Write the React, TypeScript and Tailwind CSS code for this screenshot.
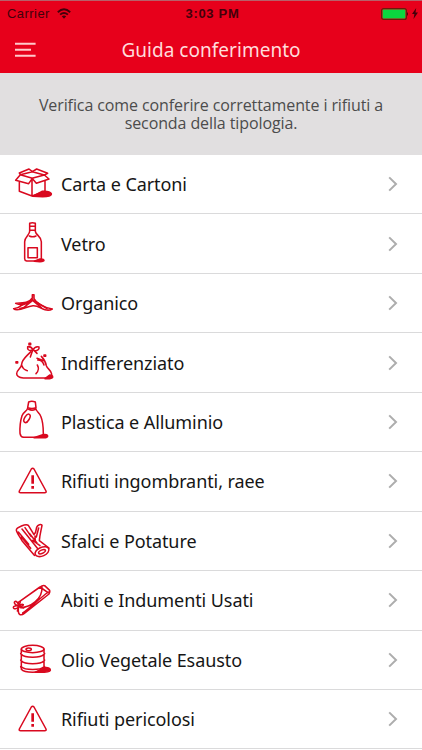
import { ReactNode } from "react";

const BoxIcon = () => (
  <>
    <path d="M58 82v27l38 14 39-14V79M96 70v53M61 59l36 11-11 16-39-10zM96 70l37-10 14 12-38 13zM61 59l-3-5 29-12 10 8 13-8 33 13-10 5M61 59l36-9 36 10" />
    <path d="M98 124l28-15c18-2 29 4 28 9-1 5-12 7-26 7z" fill="currentColor" />
  </>
);

const BottleIcon = () => (
  <>
    <path d="M89 28q8-3 17 0v24c1 11 18 15 18 31v51q0 6-7 7H80q-6-1-6-7V83c0-15 15-20 15-31zM89 37h17M89 49h17M88 66q10 5 20 0M84 101h28v30H84z" />
    <path d="M103 142l17-7q11-1 12 4 0 4-12 4z" fill="currentColor" />
  </>
);

const PeelIcon = () => (
  <>
    <path d="M97 62h5v12c5 11 27 27 55 31-7 4-15 4-22 2-14-4-20-13-36-12-20 2-29 12-48 12-4 0-8-1-10-3 12-1 20-6 27-12-8 0-16-1-21-4 23-1 41-1 50-16z" />
    <path d="M59 90c16 0 30-4 39-14M72 100l26-21 26 22M101 79l40 25M68 92l22-7M60 104l18-5" strokeWidth="5" />
  </>
);

const BagIcon = () => (
  <>
    <path d="M94 52c-9 2-12-4-11-11 8-1 14 5 16 10 3-6 10-11 18-9 2 8-6 12-13 11M98 52l-7 20M102 52l9 9M92 56c-13 15-26 22-27 38-1 13-15 15-15 28 0 8 5 11 20 13h70c12 0 15-6 15-12-1-11-13-15-16-25-2-12-8-21-15-28M111 76l20 7M113 81q14 0 19 15M112 96q8 14-4 26M66 98q3 12 16 15" />
    <path d="M135 137l14-11q9 0 9 6 0 4-9 5zM87 31h5v4h-5zM132 66h5v4h-5zM48 86h5v4h-5z" fill="currentColor" />
  </>
);

const DetergentIcon = () => (
  <>
    <path d="M86 30q9-4 20 0l2 17q-12 5-25 0zM83 48c-1 10-13 11-17 23-5 16-7 34-6 53 1 8 5 11 11 12h54c4-2 5-6 5-11 0-19-2-39-8-53-4-10-14-13-15-24M86 52q10 5 20 0" />
    <ellipse cx="81" cy="79" rx="7" ry="14" transform="rotate(30 81 79)" />
    <path d="M102 137l26-9q15-2 15 4-1 6-15 5z" fill="currentColor" />
  </>
);

const WarningIcon = () => (
  <>
    <path d="M94 51q4-5 8 0l36 66q2 5-4 5H62q-6 0-4-5z" />
    <path d="M98 70v25M98 102v8" strokeWidth="8" strokeLinecap="butt" />
  </>
);

const LogIcon = () => (
  <>
    <path d="M49 57c0-8 29-20 36-14l17 28c10-7 3-24 13-28 4-3 11-3 11 0-3 17-7 30-8 46l29 22M49 57c0 7 10 19 17 32l37 44M55 63l31 37M66 54l48 60M75 50l18 26M64 78l28 34M89 68l22 28M98 88l22 16M109 78l7-27M105 75l1 18" />
    <ellipse cx="126" cy="122" rx="22" ry="13" transform="rotate(-24 126 122)" />
    <ellipse cx="126" cy="122" rx="11" ry="5" transform="rotate(-24 126 122)" />
  </>
);

const ClothesIcon = () => (
  <>
    <path d="M55 94l65-46q8-6 14-4l15 14q2 6-2 11L73 127q-7 6-13 4-6-3-5-17zM62 110c28-1 66-24 64-62M68 126c14-8 51-44 77-63M120 48l24 17" />
    <path d="M57 104c-5-15-12-15-14-10 0 6 7 10 14 12-8-3-17-1-17 3 1 7 11 5 17-2 2-5 8-9 13-6-1 5-8 6-13 6l-5 13M57 107l14 4M57 104l4-12" />
  </>
);

const BarrelIcon = () => (
  <>
    <ellipse cx="98" cy="57" rx="34" ry="11" />
    <ellipse cx="86" cy="58" rx="8" ry="4" />
    <path d="M64 58v10q-4 2 0 5v15q-4 2 0 5v15q-4 2 0 5v5c10 12 58 12 68 0v-5q4-3 0-5V93q4-3 0-5V73q4-3 0-5V58M64 73c10 12 58 12 68 0M64 92c10 12 58 12 68 0M64 110c10 11 58 11 68 0" />
    <path d="M105 127l27-14c14-2 20 3 19 8-1 4-15 6-32 6z" fill="currentColor" />
  </>
);

const items: { label: string; icon: ReactNode }[] = [
  { label: "Carta e Cartoni", icon: <BoxIcon /> },
  { label: "Vetro", icon: <BottleIcon /> },
  { label: "Organico", icon: <PeelIcon /> },
  { label: "Indifferenziato", icon: <BagIcon /> },
  { label: "Plastica e Alluminio", icon: <DetergentIcon /> },
  { label: "Rifiuti ingombranti, raee", icon: <WarningIcon /> },
  { label: "Sfalci e Potature", icon: <LogIcon /> },
  { label: "Abiti e Indumenti Usati", icon: <ClothesIcon /> },
  { label: "Olio Vegetale Esausto", icon: <BarrelIcon /> },
  { label: "Rifiuti pericolosi", icon: <WarningIcon /> },
];

const StatusBar = () => (
  <div className="grid h-[25px] grid-cols-[1fr_auto_1fr] items-center pr-1 pl-[7px] font-['Liberation_Sans',sans-serif] text-[13px] text-[#43000a]">
    <div className="flex items-center gap-[7px]">
      <span className="tracking-[0.45px]">Carrier</span>
      <svg className="h-[11px] w-[14px]" viewBox="0 0 14 11" fill="none" stroke="currentColor" strokeWidth="1.9">
        <path d="M.8 4.2Q7-1.5 13.2 4.2M3.1 6.6q3.9-3.4 7.8 0" />
        <path d="M4.8 8.3q2.2-1.8 4.4 0L7 10.7z" fill="currentColor" stroke="none" />
      </svg>
    </div>
    <span className="font-bold tracking-[0.7px]">3:03 PM</span>
    <div className="flex items-center justify-end gap-[3px]">
      <svg className="h-3 w-[28px]" viewBox="0 0 28 12">
        <rect x=".6" y=".6" width="24.8" height="10.8" rx="2" fill="none" stroke="#6b1a0a" strokeWidth="1.2" />
        <rect x="1.6" y="1.6" width="22.8" height="8.8" rx="1" fill="#0bd73f" />
        <path d="M26 4q2 2 0 4z" fill="currentColor" />
      </svg>
      <svg className="h-[11px] w-[6px]" viewBox="0 0 6 11" fill="currentColor">
        <path d="M4.2 0L0 6h2.4L1.5 11 6 4.5H3.5z" />
      </svg>
    </div>
  </div>
);

const Header = () => (
  <header className="h-[73px] border-t border-[#b7606a] bg-[#e7001b]">
    <StatusBar />
    <div className="grid h-[47px] grid-cols-[1fr_auto_1fr] items-center">
      <svg className="ml-[15px] h-4 w-[21px]" viewBox="0 0 21 16" fill="none" stroke="#ffc9cb" strokeWidth="2">
        <path d="M0 1.7h20.6M0 7.7h16M0 13.7h20.6" />
      </svg>
      <h1 className="pt-px text-[19px] tracking-[0.03px] text-[#ffdcdc]">Guida conferimento</h1>
    </div>
  </header>
);

const Row = ({ label, icon }: { label: string; icon: ReactNode }) => (
  <li className="flex h-[59.45px] items-center border-b border-[#dadadb]">
    <svg
      className="h-[59px] w-[61px] shrink-0 text-[#d9091f]"
      viewBox="0 0 183 177"
      fill="none"
      stroke="currentColor"
      strokeWidth="4.6"
      strokeLinejoin="round"
      strokeLinecap="round"
    >
      {icon}
    </svg>
    <span className="flex-1 pt-px text-[18px] tracking-[-0.08px] whitespace-nowrap text-[#161616]">{label}</span>
    <svg className="mr-[24px] h-4 w-[10px]" viewBox="0 0 10 16" fill="none" stroke="#adadad" strokeWidth="2">
      <path d="M1.2 1.4L8 8l-6.8 6.6" />
    </svg>
  </li>
);

export default function App() {
  return (
    <div className="h-[750px] w-[422px] overflow-hidden bg-white font-['Noto_Sans',sans-serif]">
      <Header />
      <div className="flex h-[82px] flex-col items-center justify-center bg-[#e1dfe0] font-['Open_Sans',sans-serif] text-[16px] leading-[18px] tracking-[-0.1px] text-[#4c4c4c]">
        <p>Verifica come conferire correttamente i rifiuti a</p>
        <p>seconda della tipologia.</p>
      </div>
      <ul>
        {items.map((item) => (
          <Row key={item.label} {...item} />
        ))}
      </ul>
    </div>
  );
}
